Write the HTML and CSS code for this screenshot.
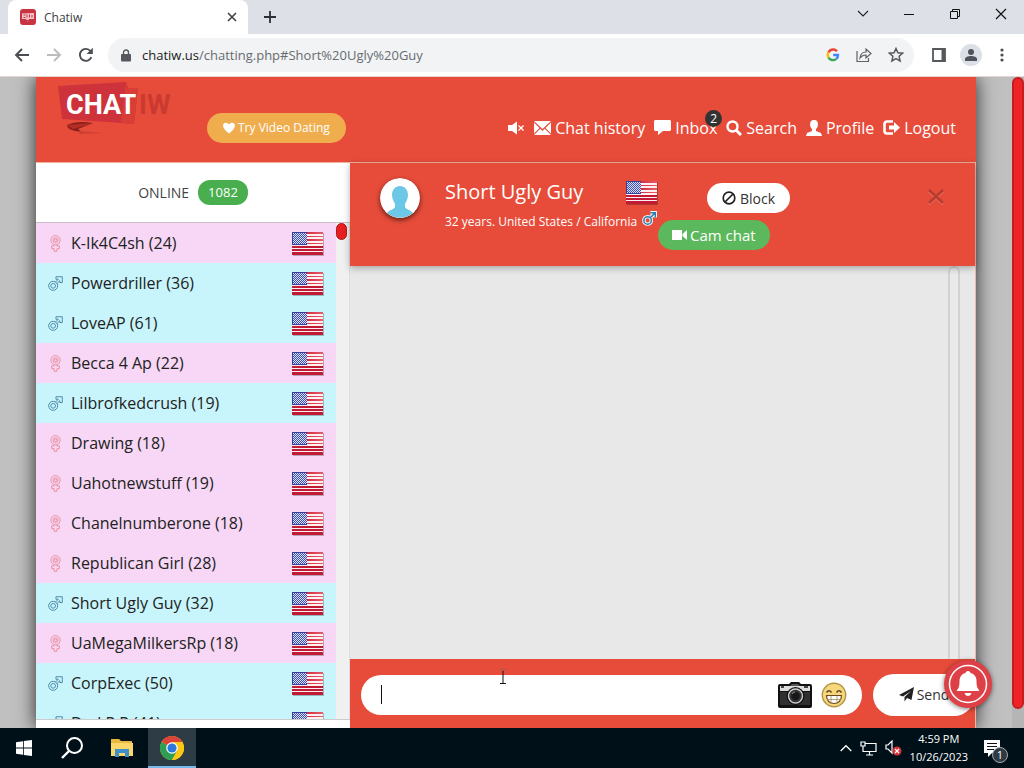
FILE: index.html
```html
<!DOCTYPE html>
<html lang="en">
<head>
<meta charset="utf-8">
<title>Chatiw</title>
<link rel="stylesheet" href="styles.css">
</head>
<body>
<svg class="sprite" aria-hidden="true">
  <defs>
    <pattern id="stars" width="2" height="2" patternUnits="userSpaceOnUse">
      <rect width="2" height="2" fill="#4050ac"/><rect width="1" height="1" fill="#d5dcf6"/><rect x="1" y="1" width="1" height="1" fill="#d5dcf6"/>
    </pattern>
    <linearGradient id="flagShade" gradientUnits="userSpaceOnUse" x1="15" y1="0" x2="31" y2="0"><stop stop-color="#d62b40"/><stop offset="1" stop-color="#e8606c"/></linearGradient>
  </defs>
  <symbol id="flag" viewBox="0 0 32 24">
    <rect x="1" y="1" width="31" height="23" fill="#000" opacity=".25"/>
    <rect width="31" height="23" fill="#fdf0f3"/>
    <path d="M15 0h16v2H15zM15 4h16v1H15zM15 7h16v2H15zM15 11h16v1H15z" fill="url(#flagShade)"/>
    <path d="M0 14h31v2H0zM0 17h31v2H0zM0 20h31v3H0z" fill="#c21a34"/>
    <rect width="15" height="13" fill="#33409c"/>
    <rect x="1" y="1" width="14" height="11" fill="url(#stars)"/>
  </symbol>
  <symbol id="male" viewBox="0 0 16 16">
    <g fill="none" stroke="currentColor"><circle cx="5.500" cy="10.500" r="4.800"/><circle cx="5.500" cy="10.500" r="2.500"/><path d="M8 6.500 11 3.500H8.500V.8H15.200V7H12.600V5L9.500 8"/></g>
  </symbol>
  <symbol id="female" viewBox="0 0 12 18">
    <g fill="none" stroke="currentColor" stroke-width=".9"><circle cx="6" cy="5.500" r="4.900"/><circle cx="6" cy="5.500" r="2.600"/><path d="M4.500 10.300V11.500H2V14.500H4.500V17.200H7.500V14.500H10V11.500H7.500V10.300M4.500 5.500 6 4l1.500 1.500L6 7z"/></g>
  </symbol>
</svg>

<header class="tabstrip">
  <div class="tab">
    <svg class="favicon" viewBox="0 0 16 16"><rect width="16" height="16" rx="3" fill="#c93443"/><path d="M2 4.500 14 4v6H9l-1 3-2-3H2z" fill="#f4c3c8"/><path d="M3.500 6h2M3.500 8.500h2M7 5.500v3M9.500 8.500v-3M12 6v2.500M6 11.500h3" stroke="#c93443"/></svg>
    <span class="tab-title">Chatiw</span>
    <button class="plain" aria-label="Close tab"><svg width="10" height="10" viewBox="0 0 10 10"><path d="m1 1 8 8M9 1 1 9" stroke="#3c4043" stroke-width="1.600"/></svg></button>
  </div>
  <button class="plain new-tab" aria-label="New tab"><svg width="12" height="12" viewBox="0 0 12 12"><path d="M6 0v12M0 6h12" stroke="#2c2f33" stroke-width="1.800"/></svg></button>
  <div class="window-controls">
    <button class="plain" aria-label="Search tabs"><svg width="12" height="12" viewBox="0 0 12 12"><path d="m1 3 5 5 5-5" fill="none" stroke="#222" stroke-width="1.100"/></svg></button>
    <button class="plain" aria-label="Minimize"><svg width="12" height="12" viewBox="0 0 12 12"><path d="M1 6.500h10" stroke="#111"/></svg></button>
    <button class="plain" aria-label="Restore"><svg width="12" height="12" viewBox="0 0 12 12"><path d="M1.500 3.500h7v7h-7zM3.500 3V1.500h7v7H9" fill="none" stroke="#111"/></svg></button>
    <button class="plain" aria-label="Close"><svg width="12" height="12" viewBox="0 0 12 12"><path d="m1 1 10 10M11 1 1 11" stroke="#111" stroke-width="1.200"/></svg></button>
  </div>
</header>

<nav class="toolbar">
  <button class="plain" aria-label="Back"><svg width="16" height="16" viewBox="0 0 16 16"><path d="M15 8H2M8 2 2 8l6 6" fill="none" stroke="#4a4d51" stroke-width="1.900"/></svg></button>
  <button class="plain" aria-label="Forward"><svg width="16" height="16" viewBox="0 0 16 16"><path d="M1 8h13M8 2l6 6-6 6" fill="none" stroke="#babcbe" stroke-width="1.900"/></svg></button>
  <button class="plain" aria-label="Reload"><svg width="16" height="16" viewBox="0 0 16 16"><path d="M13.400 10.200A6 6 0 1 1 12.500 4" fill="none" stroke="#4a4d51" stroke-width="1.900"/><path d="M14.800.800V7H8.600z" fill="#4a4d51"/></svg></button>
  <div class="address">
    <svg width="10" height="13" viewBox="0 0 10 13"><rect y="5" width="10" height="7.500" rx="1" fill="#55585c"/><path d="M2.500 5.500V3.500a2.500 2.500 0 0 1 5 0v2" fill="none" stroke="#55585c" stroke-width="1.400"/></svg>
    <span class="url"><span class="host">chatiw.us</span>/chatting.php#Short%20Ugly%20Guy</span>
    <button class="plain" aria-label="Google"><svg width="14" height="14" viewBox="0 0 14 14" fill="none" stroke-width="2.400"><path d="M11 3.200A5.200 5.200 0 0 0 2.500 4.400" stroke="#ea4335"/><path d="M2.500 4.400a5.200 5.200 0 0 0 0 5.200" stroke="#fbbc05"/><path d="M2.500 9.600a5.200 5.200 0 0 0 7.600 1.500" stroke="#34a853"/><path d="M10.100 11.100A4.800 4.800 0 0 0 12 7H7.200" stroke="#4285f4"/></svg></button>
    <button class="plain" aria-label="Share"><svg width="16" height="16" viewBox="0 0 16 16" fill="none" stroke="#5f6368" stroke-width="1.200"><path d="M1 4v10.500h11.500V11"/><path d="M4 11c.5-4 2.500-6 6-6V2l5 4.500-5 4.500V8c-3 0-4.500 1-6 3z"/></svg></button>
    <button class="plain" aria-label="Bookmark"><svg width="16" height="16" viewBox="0 0 16 16"><path d="m8 1.500 1.900 4.300 4.700.4-3.500 3.100 1 4.600L8 11.500l-4.100 2.400 1-4.600L1.400 6.200l4.700-.4z" fill="none" stroke="#55585c" stroke-width="1.500"/></svg></button>
  </div>
  <button class="plain" aria-label="Side panel"><svg width="14" height="14" viewBox="0 0 14 14"><path d="M1 1h12v12H1z" fill="#fff" stroke="#55585c" stroke-width="1.800"/><path d="M9.500 1H13v12H9.500z" fill="#55585c"/></svg></button>
  <button class="plain person" aria-label="You"><svg width="12" height="12" viewBox="0 0 12 12" fill="#50535b"><circle cx="6" cy="3" r="3"/><path d="M0 12V10c0-4 12-4 12 0v2z"/></svg></button>
  <button class="plain" aria-label="Menu"><svg width="4" height="14" viewBox="0 0 4 14" fill="#4a4d51"><circle cx="2" cy="2" r="1.600"/><circle cx="2" cy="7" r="1.600"/><circle cx="2" cy="12" r="1.600"/></svg></button>
</nav>

<div class="viewport">
  <div class="page">
    <header class="site-header">
      <a class="logo" href="#" aria-label="Chatiw">
        <svg width="122" height="58" viewBox="0 0 122 58">
          <path d="m6 9 68-4 2 6 10 0-4 36-26-2-46-3z" fill="#ce323a"/><path d="m74 5 2 6h10l-4 36-13-1z" fill="#d93d38"/>
          <path d="M15 48q10-5 26-2l-15 6 4 3q-10-1-14-4z" fill="#8b211b"/><path d="m15 48 26-2-20 6z" fill="#b52d25"/><path d="m26 54 26 2-24 1z" fill="#cf4033"/>
          <text x="14" y="37" class="logo-chat">CHAT</text><text x="87" y="37" class="logo-iw">IW</text>
        </svg>
      </a>
      <a class="dating" href="#"><svg width="12" height="12" viewBox="0 0 12 12"><path d="M6 11.500C2 8 0 6 0 3.500 0 .5 4-.5 6 2.500 8-.5 12 .5 12 3.500 12 6 10 8 6 11.500z" fill="#fff"/></svg>Try Video Dating</a>
      <nav class="menu">
        <a href="#" aria-label="Mute"><svg width="17" height="14" viewBox="0 0 17 14"><path d="M0 4h4l5-3.500v13L4 10H0z" fill="#fff"/><path d="m10.500 4.500 5 5M15.500 4.500l-5 5" stroke="#fff" stroke-width="1.300"/></svg></a>
        <a href="#"><svg width="17" height="14" viewBox="0 0 17 14" fill="#fff"><path d="M0 0h17L8.500 8zM0 1.500 5.500 7 0 12.500zM17 1.500 11.500 7l5.500 5.500zM0 14l6.300-6.200L8.500 10l2.200-2.200L17 14z"/></svg>Chat history</a>
        <a href="#" class="inbox"><svg width="17" height="15" viewBox="0 0 17 15"><path d="M1 0h15l1 1v9l-1 1H9l-5 4v-4H1l-1-1V1z" fill="#fff"/></svg>Inbox<span class="count">2</span></a>
        <a href="#"><svg width="16" height="16" viewBox="0 0 16 16" fill="none" stroke="#fff"><circle cx="6.500" cy="6.500" r="5" stroke-width="2.400"/><path d="m10 10 5 5" stroke-width="3"/></svg>Search</a>
        <a href="#"><svg width="16" height="16" viewBox="0 0 16 16"><path d="M8 0c3 0 4 2 4 4.500 0 2-1 3.500-2 4.500v2l5 2 1 3H0l1-3 5-2V9C5 8 4 6.500 4 4.500 4 2 5 0 8 0z" fill="#fff"/></svg>Profile</a>
        <a href="#"><svg width="17" height="15" viewBox="0 0 17 15"><path d="M10 1.500H4A2.500 2.500 0 0 0 1.500 4v7A2.500 2.500 0 0 0 4 13.500h6" fill="none" stroke="#fff" stroke-width="2.600"/><path d="M6 5.500h5V2l6 5.500L11 13V9.500H6z" fill="#fff"/></svg>Logout</a>
      </nav>
    </header>

    <div class="columns">
      <aside class="sidebar">
        <h2 class="online">ONLINE <span class="badge">1082</span></h2>
        <div class="list-wrap">
          <ul class="users">
            <li class="f"><svg class="sex"><use href="#female"/></svg><a href="#">K-Ik4C4sh (24)</a><svg class="flag"><use href="#flag"/></svg></li>
            <li class="m"><svg class="sex"><use href="#male"/></svg><a href="#">Powerdriller (36)</a><svg class="flag"><use href="#flag"/></svg></li>
            <li class="m"><svg class="sex"><use href="#male"/></svg><a href="#">LoveAP (61)</a><svg class="flag"><use href="#flag"/></svg></li>
            <li class="f"><svg class="sex"><use href="#female"/></svg><a href="#">Becca 4 Ap (22)</a><svg class="flag"><use href="#flag"/></svg></li>
            <li class="m"><svg class="sex"><use href="#male"/></svg><a href="#">Lilbrofkedcrush (19)</a><svg class="flag"><use href="#flag"/></svg></li>
            <li class="f"><svg class="sex"><use href="#female"/></svg><a href="#">Drawing (18)</a><svg class="flag"><use href="#flag"/></svg></li>
            <li class="f"><svg class="sex"><use href="#female"/></svg><a href="#">Uahotnewstuff (19)</a><svg class="flag"><use href="#flag"/></svg></li>
            <li class="f"><svg class="sex"><use href="#female"/></svg><a href="#">Chanelnumberone (18)</a><svg class="flag"><use href="#flag"/></svg></li>
            <li class="f"><svg class="sex"><use href="#female"/></svg><a href="#">Republican Girl (28)</a><svg class="flag"><use href="#flag"/></svg></li>
            <li class="m"><svg class="sex"><use href="#male"/></svg><a href="#">Short Ugly Guy (32)</a><svg class="flag"><use href="#flag"/></svg></li>
            <li class="f"><svg class="sex"><use href="#female"/></svg><a href="#">UaMegaMilkersRp (18)</a><svg class="flag"><use href="#flag"/></svg></li>
            <li class="m"><svg class="sex"><use href="#male"/></svg><a href="#">CorpExec (50)</a><svg class="flag"><use href="#flag"/></svg></li>
            <li class="m"><svg class="sex"><use href="#male"/></svg><a href="#">Dad P P (41)</a><svg class="flag"><use href="#flag"/></svg></li>
          </ul>
          <div class="list-scroll"><span></span></div>
        </div>
      </aside>

      <main class="chat">
        <section class="chat-header">
          <svg class="avatar" viewBox="0 0 40 40"><circle cx="20" cy="20" r="20" fill="#fff"/><path d="M20 8c5 0 8 4 8 9 0 4-2 7-3 9v3c0 2 6 3 8 6a20 20 0 0 1-26 0c2-3 8-4 8-6v-3c-1-2-3-5-3-9 0-5 3-9 8-9z" fill="#6cc8e6"/></svg>
          <div class="who">
            <div class="who-line"><h1>Short Ugly Guy</h1><svg class="flag"><use href="#flag"/></svg></div>
            <p>32 years. United States / California <svg class="who-sex" viewBox="0 0 16 16" fill="none"><g stroke="#f4fbff" stroke-width="3.600"><circle cx="6" cy="10" r="4"/><path d="m9 7 5-5M9 1.800h5.200V7"/></g><g stroke="#2c7cab" stroke-width="1.600"><circle cx="6" cy="10" r="4"/><path d="m9 7 5-5M9 1.800h5.200V7"/></g></svg></p>
          </div>
          <div class="actions">
            <button class="block"><svg width="14" height="14" viewBox="0 0 14 14" fill="none" stroke="#222" stroke-width="1.700"><circle cx="7" cy="7" r="5.800"/><path d="m3 11 8-8"/></svg>Block</button>
            <button class="cam"><svg width="16" height="12" viewBox="0 0 16 12" fill="#fff"><path d="M0 1h10v10H0zM10.500 5 15 1v10l-4.500-4z"/></svg>Cam chat</button>
          </div>
          <button class="plain close-chat" aria-label="Close chat"><svg width="18" height="18" viewBox="0 0 18 18"><path d="m2 3 14 13M16 3 2 16" stroke="#ee7563" stroke-width="2.500"/><path d="m2 2 14 13M16 2 2 15" stroke="#b83c2f" stroke-width="2.800"/></svg></button>
        </section>
        <section class="messages" aria-label="Messages"><div class="message-scroll"></div></section>
        <form class="composer">
          <div class="field">
            <span class="caret"></span>
            <input type="text" aria-label="Message">
            <button type="button" class="plain" aria-label="Send picture"><svg width="34" height="26" viewBox="0 0 34 26"><path d="M2 2h9l2-2h8l2 2h9q2 0 2 2v20q0 2-2 2H2q-2 0-2-2V4q0-2 2-2z" fill="#111"/><path d="M2 4h30v5H2z" fill="#ddd"/><path d="M12 4l2-2h6l2 2z" fill="#555"/><path d="M2 10h30v13H2z" fill="#303033"/><path d="M3 4h3v2H3zM26 4h4v2h-4z" fill="#444"/><circle cx="17.500" cy="14" r="9" fill="#111"/><circle cx="17.500" cy="14" r="7" fill="#333" stroke="#ccc" stroke-width="1.400"/><circle cx="17.500" cy="14" r="4.200" fill="#18181b"/><path d="M14 12q1-2 3-2" stroke="#999" fill="none"/></svg></button>
            <button type="button" class="plain" aria-label="Emoji"><svg width="26" height="26" viewBox="0 0 26 26"><circle cx="13" cy="13" r="11.700" fill="#f6d77c" stroke="#b49445" stroke-width="1.400"/><path d="M5.500 10.500q2.500-3.500 5 0M15.500 10.500q2.500-3.500 5 0" fill="none" stroke="#5b4523" stroke-width="1.500"/><path d="M5.500 13.500h15q-.5 8-7.500 8t-7.500-8z" fill="#fff" stroke="#6a4b20" stroke-width="1.200"/><path d="M6 17.500h14M10 14v7M16 14v7" stroke="#a58a58" stroke-width=".8"/></svg></button>
          </div>
          <button type="button" class="send"><svg width="15" height="15" viewBox="0 0 15 15"><path d="M15 0 12.500 13 8 11l-2.500 3.500V10L12 4 4 9.500 0 8z" fill="#222"/></svg>Send</button>
        </form>
      </main>
    </div>
  </div>
  <div class="page-scroll"><span></span></div>
  <button class="bell" aria-label="Notifications"><svg width="40" height="40" viewBox="0 0 40 40"><circle cx="20" cy="20" r="18.500" fill="none" stroke="#fff" stroke-width="1.500"/><path d="M20 7c1.500 0 2.500 1 2.500 2 4 1 6 4 6 8 0 6 1 7 3 10h-23c2-3 3-4 3-10 0-4 2-7 6-8 0-1 1-2 2.500-2zM16.500 29h7q-1 3-3.500 3t-3.500-3z" fill="#fff"/></svg></button>
  <svg class="pointer" viewBox="0 0 8 16"><path d="M1 .5h2.500v1h1v-1H7" fill="none" stroke="#a55"/><path d="M4 2v12M1 14.500h6" stroke="#111"/></svg>
</div>

<footer class="taskbar">
  <button class="task" aria-label="Start"><svg width="16" height="16" viewBox="0 0 16 16" fill="#fff"><path d="M0 2.200 7 1.200V7.600H0zM7.800 1.100 16 0v7.600H7.800zM0 8.400h7v6.400l-7-1zM7.800 8.400H16V16l-8.200-1.100z"/></svg></button>
  <button class="task" aria-label="Search"><svg width="22" height="22" viewBox="0 0 22 22" fill="none" stroke="#fff" stroke-width="2"><circle cx="13.500" cy="8.500" r="7.500"/><path d="m8 14-7 7" stroke-width="2.400"/></svg></button>
  <div class="pinned">
    <button class="task" aria-label="File Explorer"><svg width="22" height="20" viewBox="0 0 22 20"><path d="M0 1h8l2 2h11v15H0z" fill="#e9b83e"/><path d="M0 5h22v13H0z" fill="#fbd76a"/><path d="M4 11h14v8h-4v-4H8v4H4z" fill="#3f8fca"/></svg></button>
    <button class="task active" aria-label="Chrome"><svg width="24" height="24" viewBox="0 0 24 24"><circle cx="12" cy="12" r="12" fill="#f9c714"/><path d="M12 12 1.600 6a12 12 0 0 1 20.800 0z" fill="#db4437"/><path d="M12 12 1.600 6A12 12 0 0 0 12 24l5-9z" fill="#2f9e55"/><path d="M12 6h10.400a12 12 0 0 1-10.400 18l5.200-9z" fill="#f9c714"/><circle cx="12" cy="12" r="5.800" fill="#fff"/><circle cx="12" cy="12" r="4.600" fill="#2b78de"/></svg></button>
  </div>
  <div class="tray">
    <svg width="12" height="8" viewBox="0 0 12 8"><path d="m.7 7 5.300-5.300L11.300 7" fill="none" stroke="#fff" stroke-width="1.300"/></svg>
    <svg width="17" height="15" viewBox="0 0 17 15" fill="none" stroke="#fff" stroke-width="1.200"><path d="M5 2.500h11v8H3V6M9.500 10.500V14M6 14h7M1 1h4v4H1zM3 5v2"/></svg>
    <svg width="17" height="16" viewBox="0 0 17 16"><path d="M1 5h2l4-4v12L3 9H1z" fill="none" stroke="#fff" stroke-width="1.200"/><circle cx="12" cy="11" r="4.500" fill="#d13438"/><path d="m10 9 4 4M14 9l-4 4" stroke="#fff" stroke-width="1.200"/></svg>
    <div class="clock"><time>4:59 PM</time><time>10/26/2023</time></div>
    <div class="notes"><svg width="16" height="17" viewBox="0 0 16 17"><path d="M0 0h16v13H8l-4 4v-4H0z" fill="#fff"/><path d="M3 3.500h10M3 6.500h10M3 9.500h7" stroke="#08121f"/></svg><span>1</span></div>
  </div>
</footer>
</body>
</html>
```
FILE: styles.css
```css
* { box-sizing: border-box; }
body {
  margin: 0;
  height: 100vh;
  display: flex;
  flex-direction: column;
  overflow: hidden;
  font-family: "Open Sans", "Noto Sans", sans-serif;
  font-size: 16px;
  color: #222;
}
svg { display: block; flex: none; }
a { color: inherit; text-decoration: none; }
h1, h2, p, ul { margin: 0; padding: 0; font-weight: 400; }
button { font: inherit; border: 0; cursor: pointer; }
.sprite { position: absolute; width: 0; height: 0; }
.plain { background: none; padding: 0; display: flex; align-items: center; justify-content: center; }

.tabstrip { height: 34px; flex: none; display: flex; background: #dde0e6; }
.tab {
  width: 240px;
  margin-left: 8px;
  padding: 0 11px 0 12px;
  display: flex;
  align-items: center;
  gap: 8px;
  background: #fff;
  border-radius: 8px 8px 0 0;
}
.favicon { width: 16px; height: 16px; }
.tab-title { flex: 1; font-size: 12px; color: #3c4043; }
.new-tab { width: 44px; }
.window-controls { margin-left: auto; display: flex; padding-bottom: 6px; }
.window-controls button { width: 46px; }

.toolbar { height: 43px; flex: none; display: flex; align-items: center; gap: 16px; padding: 0 20px 0 14px; background: #fff; border-bottom: 1px solid #e4d5d3; }
.address { flex: 1; height: 34px; display: flex; align-items: center; gap: 16px; margin: 0 2px 0 -2px; padding: 0 10px 0 13px; border-radius: 17px; background: #f1f3f4; }
.url { flex: 1; margin-left: -5px; font-size: 13px; color: #676b70; }
.host { color: #202124; }
.toolbar > .person { width: 22px; height: 22px; margin: 0 2px 0 -2px; border-radius: 50%; background: #dcdfe6; }

.viewport { position: relative; flex: 1; min-height: 0; display: flex; background: #c0c0c0; overflow: hidden; }
.page { flex: 1; min-width: 0; margin: 0 36px; display: flex; flex-direction: column; background: #e74c3a; box-shadow: 0 0 18px rgba(0, 0, 0, .8); }
.page-scroll { width: 12px; padding-bottom: 19px; background: #b5b5b5; position: relative; }
.page-scroll span { display: block; height: 100%; border-radius: 6px; background: #ee2326; border: 2px solid #c91c20; }

.site-header { height: 86px; flex: none; display: flex; align-items: center; padding: 16px 20px 0 16px; border-bottom: 1px solid #f0b39c; color: #fff; }
.logo { align-self: flex-start; margin: -16px 33px 0 0; }
.logo svg { overflow: visible; }
.logo-chat, .logo-iw { font-family: Roboto, sans-serif; font-weight: 700; font-size: 27px; fill: #fff; }
.logo-iw { fill: #cb3a31; }
.dating { height: 30px; display: flex; align-items: center; gap: 3px; padding: 0 16px; border-radius: 15px; background: #f0ad4e; font-size: 12px; white-space: nowrap; }
.menu { margin-left: auto; display: flex; gap: 9px; white-space: nowrap; }
.menu a { display: flex; align-items: center; gap: 4px; }
.inbox { position: relative; }
.count { position: absolute; top: -7px; right: -5px; width: 17px; height: 17px; border-radius: 50%; background: #333; font-size: 12px; line-height: 17px; text-align: center; }

.columns { flex: 1; min-height: 0; display: grid; grid-template-columns: 314px minmax(0, 1fr); }
.sidebar { min-width: 0; min-height: 0; display: flex; flex-direction: column; padding-bottom: 8px; background: #fff; }
.online { height: 60px; flex: none; display: flex; align-items: center; justify-content: center; gap: 9px; border-bottom: 1px solid #c9bcc9; font-size: 14px; color: #444; }
.badge { height: 25px; line-height: 25px; padding: 0 10px; border-radius: 12px; background: #49ae4e; color: #fff; font-size: 13px; }
.list-wrap { flex: 1; min-height: 0; display: flex; overflow: hidden; border-bottom: 1px solid #ccc; }
.users { flex: 1; min-width: 0; list-style: none; }
.users li { height: 40px; display: flex; align-items: center; gap: 8px; padding: 0 12px; }
.users a { flex: 1; }
.f { background: #f7d7f5; }
.m { background: #c8f5fb; }
.sex { width: 15px; height: 17px; color: #4a84a4; }
.f .sex { color: #ea8593; }
.flag { width: 32px; height: 24px; margin-top: 2px; }
.list-scroll { width: 14px; padding: 0 2px 0 0; background: #f0f0f0; border-right: 1px solid #ddd; }
.list-scroll span { display: block; height: 17px; border-radius: 6px; background: #e81f22; border: 1px solid #b3181a; }

.chat { min-width: 0; min-height: 0; display: flex; flex-direction: column; border-right: 1px solid #f3b5a6; }
.chat-header { height: 103px; flex: none; position: relative; z-index: 1; display: flex; align-items: flex-start; padding: 13px 30px 0 30px; background: #e74c3a; color: #fff; box-shadow: 0 2px 7px rgba(0, 0, 0, .3); }
.avatar { width: 40px; height: 40px; margin-top: 2px; border-radius: 50%; box-shadow: 0 2px 5px rgba(0, 0, 0, .6); }
.who { width: 213px; margin-left: 25px; }
.who-line { display: flex; align-items: center; justify-content: space-between; height: 32px; }
.who h1 { font-size: 20px; line-height: 32px; }
.who p { display: flex; align-items: center; gap: 5px; height: 27px; font-size: 12px; white-space: nowrap; }
.who-sex { width: 15px; height: 15px; margin-bottom: 6px; }
.actions { flex: 1; display: flex; flex-direction: column; align-items: flex-start; gap: 7px; padding-top: 7px; }
.actions button { height: 30px; display: flex; align-items: center; gap: 4px; padding: 0 15px; border-radius: 15px; }
.block { margin-left: 49px; background: #fff; color: #333; font-size: 14px; }
.actions .cam { gap: 2px; padding: 0 14px; background: #5cb85c; color: #fff; font-size: 15px; }
.close-chat { margin-top: 12px; }
.messages { flex: 1; min-height: 0; display: flex; justify-content: flex-end; padding-right: 15px; background: #e8e8e8; }
.message-scroll { width: 12px; border: 2px solid #d2d2d2; border-bottom: 0; border-radius: 6px 6px 0 0; background: #eaeaea; }
.composer { height: 69px; flex: none; display: flex; align-items: center; gap: 11px; padding: 2px 0 0 11px; }
.field { flex: 1; min-width: 0; height: 40px; display: flex; align-items: center; gap: 9px; padding: 0 15px 0 20px; border-radius: 20px; background: #fff; }
.field input { flex: 1; min-width: 0; border: 0; outline: 0; background: none; font: inherit; }
.caret { width: 1px; height: 19px; background: #111; }
.send { width: 102px; height: 42px; display: flex; align-items: center; justify-content: center; gap: 3px; padding: 0; border-radius: 21px; background: #fff; color: #333; font-size: 14px; }
.bell { position: absolute; right: 32px; bottom: 20px; width: 48px; height: 48px; padding: 4px; border-radius: 50%; background: #dd4047; box-shadow: 0 1px 5px rgba(0, 0, 0, .5); z-index: 2; }
.pointer { position: absolute; left: 499px; top: 592px; width: 8px; height: 16px; }

.taskbar { height: 40px; flex: none; display: flex; background: #001019; color: #fff; }
.task { width: 48px; padding: 0; display: flex; align-items: center; justify-content: center; background: none; }
.pinned { display: flex; gap: 2px; padding-left: 2px; }
.pinned .task { color: inherit; }
.task.active { padding-top: 2px; background: #2d3c45; border-bottom: 2px solid #76b9ed; }
.tray { margin-left: auto; display: flex; align-items: center; gap: 8px; padding-right: 24px; }
.clock { display: flex; flex-direction: column; align-items: center; font-size: 11px; line-height: 18px; }
.notes { position: relative; margin-left: 8px; }
.notes span { position: absolute; left: 8px; top: 7px; width: 16px; height: 16px; border-radius: 50%; border: 1px solid #a5aab0; background: #303a43; font-size: 11px; line-height: 14px; text-align: center; }
```
